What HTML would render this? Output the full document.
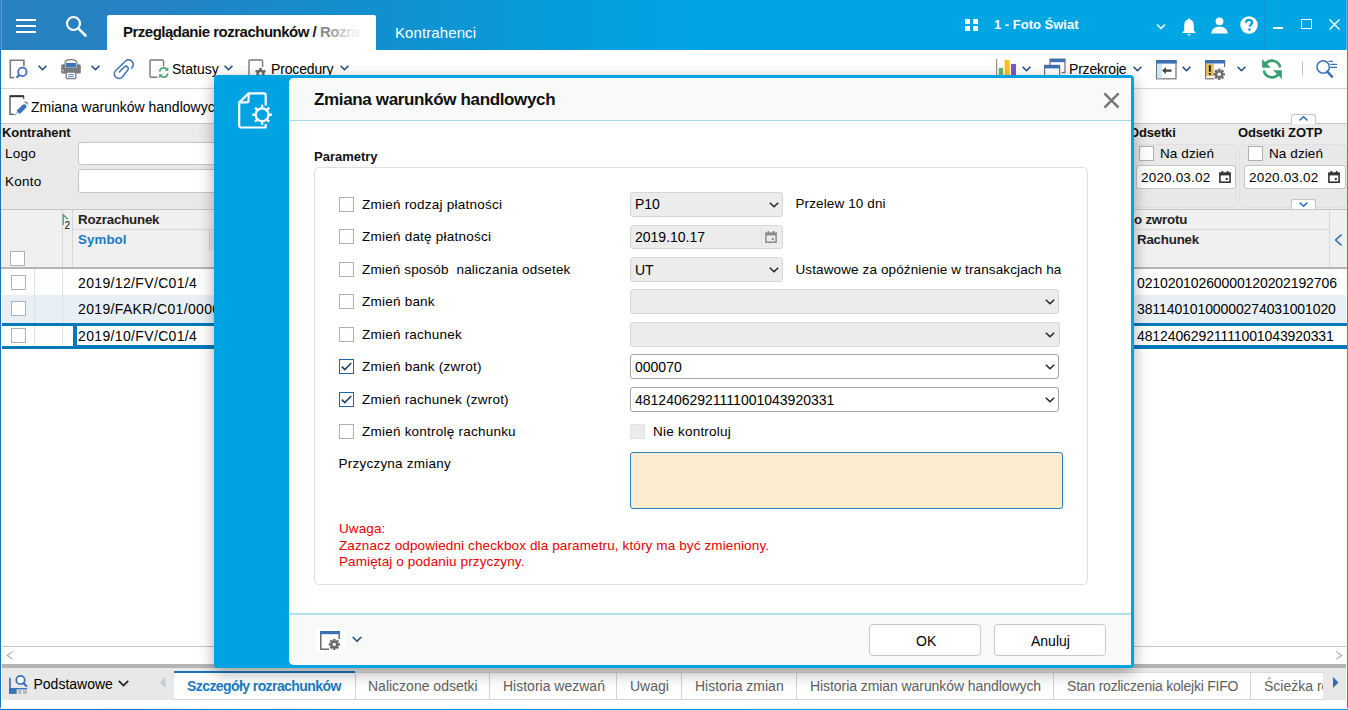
<!DOCTYPE html>
<html><head><meta charset="utf-8">
<style>
*{box-sizing:border-box;margin:0;padding:0}
html,body{width:1348px;height:710px;overflow:hidden;background:#fff}
body{position:relative;font-family:"Liberation Sans",sans-serif;color:#000}
.a{position:absolute}
.t{position:absolute;white-space:nowrap;line-height:1}
svg{position:absolute;overflow:visible}
.cb{position:absolute;width:15px;height:15px;border:1px solid #b0b0b0;background:#fff}
.chev{position:absolute}
</style></head><body>

<!-- ============ HEADER ============ -->
<div class="a" style="left:0;top:0;width:1348px;height:50px;background:linear-gradient(90deg,#2980c0 0px,#2583c3 150px,#1190d0 380px,#02a2e1 640px,#00a5e3 760px,#00a5e3 1348px)"></div>
<div class="a" style="left:1px;top:0;width:1px;height:50px;background:#5a9fd0"></div>
<div class="a" style="left:1346px;top:0;width:1px;height:50px;background:#45bce9"></div>
<!-- hamburger -->
<div class="a" style="left:16px;top:19px;width:20px;height:2px;background:#fff"></div>
<div class="a" style="left:16px;top:25px;width:20px;height:2px;background:#fff"></div>
<div class="a" style="left:16px;top:31px;width:20px;height:2px;background:#fff"></div>
<!-- search -->
<svg style="left:64px;top:14px" width="24" height="24" viewBox="0 0 24 24"><circle cx="9.5" cy="9.5" r="6.5" fill="none" stroke="#fff" stroke-width="2.2"/><path d="M14.3 14.3 L21.5 21.5" stroke="#fff" stroke-width="2.6" stroke-linecap="round"/></svg>
<!-- active tab -->
<div class="a" style="left:107px;top:15px;width:269px;height:35px;background:#fff;border-radius:2px 2px 0 0"></div>
<div class="t" style="left:123px;top:24px;font-size:15px;font-weight:700;letter-spacing:-0.5px;color:#111">Przeglądanie rozrachunków / <span style="color:#8a8a8a">R</span><span style="color:#a8a8a8">o</span><span style="color:#cacaca">z</span><span style="color:#e2e2e2">r</span><span style="color:#efefef">a</span></div>
<div class="t" style="left:395px;top:24.5px;font-size:15px;letter-spacing:0.1px;color:#fff">Kontrahenci</div>
<!-- apps -->
<div class="a" style="left:965px;top:19px;width:5px;height:5px;background:#fff"></div>
<div class="a" style="left:973px;top:19px;width:5px;height:5px;background:#fff"></div>
<div class="a" style="left:965px;top:26px;width:5px;height:5px;background:#fff"></div>
<div class="a" style="left:973px;top:26px;width:5px;height:5px;background:#fff"></div>
<div class="t" style="left:994px;top:18px;font-size:13px;font-weight:700;color:#fff">1 - Foto Świat</div>
<svg style="left:1156px;top:23px" width="10" height="7" viewBox="0 0 10 7"><path d="M1 1.5 L5 5.5 L9 1.5" fill="none" stroke="#fff" stroke-width="1.5"/></svg>
<!-- bell -->
<svg style="left:1181px;top:18px" width="16" height="19" viewBox="0 0 16 19"><path d="M8 1.5 C4.5 1.5 3.2 4.5 3.2 7.5 L3.2 12.5 L1 15 L15 15 L12.8 12.5 L12.8 7.5 C12.8 4.5 11.5 1.5 8 1.5 Z" fill="#fff"/><circle cx="8" cy="1.8" r="1.2" fill="#fff"/><path d="M6.3 16 L9.7 16 L8 18 Z" fill="#fff"/></svg>
<!-- person -->
<svg style="left:1211px;top:17px" width="17" height="17" viewBox="0 0 17 17"><circle cx="8.5" cy="4.3" r="3.9" fill="#fff"/><path d="M0.3 16.5 C0.8 11.5 4 9.8 8.5 9.8 C13 9.8 16.2 11.5 16.7 16.5 Z" fill="#fff"/></svg>
<!-- help -->
<svg style="left:1240px;top:16px" width="18" height="18" viewBox="0 0 18 18"><circle cx="9" cy="9" r="8.7" fill="#fff"/><path d="M6 6.8 C6 4.9 7.3 3.9 9 3.9 C10.8 3.9 12.1 5 12.1 6.5 C12.1 8.5 9.6 8.7 9.6 10.8" fill="none" stroke="#0aa0e0" stroke-width="2.2"/><circle cx="9.5" cy="13.6" r="1.3" fill="#0aa0e0"/></svg>
<div class="a" style="left:1264px;top:0;width:1px;height:50px;background:#1592cc"></div>
<!-- min max close -->
<div class="a" style="left:1273px;top:27px;width:10px;height:1.5px;background:#fff"></div>
<div class="a" style="left:1301px;top:19px;width:11px;height:10px;border:1.5px solid #fff"></div>
<svg style="left:1329px;top:19px" width="11" height="11" viewBox="0 0 11 11"><path d="M0.5 0.5 L10.5 10.5 M10.5 0.5 L0.5 10.5" stroke="#fff" stroke-width="1.4"/></svg>


<!-- ============ TOOLBAR ============ -->
<!-- ============ KONTRAHENT PANEL ============ -->
<div class="a" style="left:0;top:123px;width:1348px;height:87px;background:#ebebeb;border-top:1px solid #c6c6c6;border-bottom:1px solid #c6c6c6"></div>
<div class="t" style="left:2px;top:126px;font-size:13px;letter-spacing:-0.07px;font-weight:700;color:#111">Kontrahent</div>
<div class="a" style="left:2px;top:144px;width:230px;height:64px;background:#e9e9e9;border-radius:4px"></div>
<div class="t" style="left:5px;top:147px;font-size:13.5px;letter-spacing:0.23px;color:#000">Logo</div>
<div class="t" style="left:5px;top:175px;font-size:13.5px;letter-spacing:0.23px;color:#000">Konto</div>
<div class="a" style="left:78px;top:142px;width:160px;height:23px;background:#fff;border:1px solid #c4c4c4;border-radius:3px"></div>
<div class="a" style="left:78px;top:169px;width:160px;height:24px;background:#fff;border:1px solid #c4c4c4;border-radius:3px"></div>
<!-- odsetki -->
<div class="t" style="left:1129px;top:126px;font-size:13px;letter-spacing:-0.15px;font-weight:700;color:#111">Odsetki</div>
<div class="t" style="left:1238px;top:126px;font-size:13px;letter-spacing:-0.15px;font-weight:700;color:#111">Odsetki ZOTP</div>
<div class="a" style="left:1100px;top:144px;width:137px;height:64px;background:#e8e8e8;border:1px solid #e0e0e0;border-radius:5px"></div>
<div class="a" style="left:1239px;top:144px;width:108px;height:64px;background:#e8e8e8;border:1px solid #e0e0e0;border-radius:5px"></div>
<div class="cb" style="left:1139px;top:146px"></div>
<div class="t" style="left:1160px;top:147px;font-size:13.5px;letter-spacing:0.1px;color:#000">Na dzień</div>
<div class="cb" style="left:1248px;top:146px"></div>
<div class="t" style="left:1269px;top:147px;font-size:13.5px;letter-spacing:0.1px;color:#000">Na dzień</div>
<div class="a" style="left:1136px;top:165px;width:100px;height:24px;background:#fff;border:1px solid #c4c4c4;border-radius:3px"></div>
<div class="t" style="left:1141px;top:171px;font-size:13.5px;letter-spacing:0.18px;color:#000">2020.03.02</div>
<svg style="left:1219px;top:171px" width="12" height="12" viewBox="0 0 12 12"><rect x="0.9" y="2.2" width="10.2" height="9" fill="none" stroke="#333" stroke-width="1.6"/><rect x="0.5" y="1.8" width="11" height="2.6" fill="#333"/><rect x="2.6" y="0" width="1.6" height="2.5" fill="#333"/><rect x="7.8" y="0" width="1.6" height="2.5" fill="#333"/><rect x="6.8" y="7" width="2" height="2" fill="#333"/></svg>
<div class="a" style="left:1244px;top:165px;width:102px;height:24px;background:#fff;border:1px solid #c4c4c4;border-radius:3px"></div>
<div class="t" style="left:1249px;top:171px;font-size:13.5px;letter-spacing:0.18px;color:#000">2020.03.02</div>
<svg style="left:1328px;top:171px" width="12" height="12" viewBox="0 0 12 12"><rect x="0.9" y="2.2" width="10.2" height="9" fill="none" stroke="#333" stroke-width="1.6"/><rect x="0.5" y="1.8" width="11" height="2.6" fill="#333"/><rect x="2.6" y="0" width="1.6" height="2.5" fill="#333"/><rect x="7.8" y="0" width="1.6" height="2.5" fill="#333"/><rect x="6.8" y="7" width="2" height="2" fill="#333"/></svg>

<!-- up/down handles -->
<div class="a" style="left:1291px;top:114px;width:25px;height:10px;background:#fff;border:1px solid #c6c6c6;border-bottom:none;border-radius:3px 3px 0 0"></div>
<svg style="left:1299px;top:116px" width="9" height="5" viewBox="0 0 9 5"><path d="M0.6 4.4 L4.5 0.8 L8.4 4.4" fill="none" stroke="#2a6fb8" stroke-width="1.5"/></svg>
<div class="a" style="left:1291px;top:199px;width:25px;height:10px;background:#ebebeb;border:1px solid #c6c6c6;border-top:none;border-radius:0 0 3px 3px"></div>
<div class="a" style="left:1291px;top:199px;width:25px;height:10px;background:#fff;border:1px solid #c6c6c6;border-bottom:none;border-radius:3px 3px 0 0"></div>
<svg style="left:1299px;top:202px" width="9" height="5" viewBox="0 0 9 5"><path d="M0.6 0.6 L4.5 4.2 L8.4 0.6" fill="none" stroke="#2a6fb8" stroke-width="1.5"/></svg>
<!-- ============ GRID ============ -->
<div class="a" style="left:0;top:210px;width:1348px;height:57px;background:#f0f0f0"></div>
<div class="a" style="left:0;top:267px;width:1348px;height:2px;background:#b4b4b4"></div>
<div class="a" style="left:62px;top:210px;width:1px;height:57px;background:#d8d8d8"></div>
<div class="a" style="left:72px;top:210px;width:1px;height:57px;background:#d8d8d8"></div>
<div class="a" style="left:73px;top:229px;width:1256px;height:1px;background:#d8d8d8"></div>
<div class="a" style="left:209px;top:230px;width:6px;height:20px;border-left:1px solid #d0d0d0;background:#e8e8e8"></div>
<svg style="left:62px;top:214px" width="9" height="14" viewBox="0 0 9 14"><path d="M1.2 11 L1.2 0.8 L5.8 5.2" fill="none" stroke="#3aa56a" stroke-width="1.3"/></svg>
<div class="t" style="left:64.5px;top:221px;font-size:10px;color:#111">2</div>
<div class="t" style="left:78px;top:213px;font-size:13.3px;letter-spacing:-0.2px;font-weight:700;color:#222">Rozrachunek</div>
<div class="t" style="left:78px;top:232.5px;font-size:13.3px;letter-spacing:0.1px;font-weight:700;color:#1a7bc0">Symbol</div>
<div class="cb" style="left:10px;top:251px"></div>
<div class="t" style="left:1134px;top:213px;font-size:13.3px;letter-spacing:-0.2px;font-weight:700;color:#222">o zwrotu</div>
<div class="t" style="left:1137px;top:232.5px;font-size:13.3px;letter-spacing:-0.2px;font-weight:700;color:#222">Rachunek</div>
<div class="a" style="left:1329px;top:210px;width:1px;height:57px;background:#d8d8d8"></div>
<svg style="left:1334px;top:234px" width="9" height="12" viewBox="0 0 9 12"><path d="M7.6 0.6 L1.6 6 L7.6 11.4" fill="none" stroke="#2a6fb8" stroke-width="1.5"/></svg>
<!-- rows -->
<div class="a" style="left:2px;top:269px;width:1344px;height:26px;background:#fff"></div>
<div class="a" style="left:2px;top:295px;width:1344px;height:28px;background:#e8eff5"></div>
<div class="a" style="left:34px;top:269px;width:1px;height:54px;background:#d6e4f2"></div>
<div class="a" style="left:62px;top:269px;width:1px;height:54px;background:#d6e4f2"></div>
<div class="a" style="left:34px;top:324px;width:1px;height:22px;background:#d6e4f2"></div>
<div class="a" style="left:62px;top:324px;width:1px;height:22px;background:#d6e4f2"></div>
<div class="cb" style="left:11px;top:275px"></div>
<div class="cb" style="left:11px;top:301px"></div>
<div class="cb" style="left:11px;top:328px"></div>
<div class="t" style="left:78px;top:276px;font-size:14px;letter-spacing:0.35px;color:#000">2019/12/FV/C01/4</div>
<div class="t" style="left:78px;top:302px;font-size:14px;letter-spacing:0.35px;color:#000">2019/FAKR/C01/00001</div>
<div class="t" style="left:78px;top:329px;font-size:14px;letter-spacing:0.35px;color:#000">2019/10/FV/C01/4</div>
<div class="t" style="left:1137px;top:276px;font-size:14px;letter-spacing:-0.1px;color:#000">02102010260000120202192706</div>
<div class="t" style="left:1137px;top:302px;font-size:14px;letter-spacing:-0.1px;color:#000">38114010100000274031001020</div>
<div class="t" style="left:1137px;top:329px;font-size:14px;letter-spacing:-0.1px;color:#000">48124062921111001043920331</div>
<div class="a" style="left:2px;top:323px;width:1345px;height:2.5px;background:#0777be"></div>
<div class="a" style="left:2px;top:346px;width:1345px;height:2.5px;background:#0777be"></div>
<div class="a" style="left:73px;top:323px;width:4px;height:25px;background:#0777be"></div>
<div class="a" style="left:73px;top:345px;width:1274px;height:1px;background:#0777be"></div>

<!-- ============ SCROLL + BOTTOM TABS ============ -->
<div class="a" style="left:2px;top:646px;width:1344px;height:1px;background:#c4c4c4"></div>
<svg style="left:6px;top:651px" width="8" height="9" viewBox="0 0 8 9"><path d="M6.6 0.6 L1.2 4.5 L6.6 8.4" fill="none" stroke="#a8a8a8" stroke-width="1.1"/></svg>
<svg style="left:1335px;top:651px" width="8" height="9" viewBox="0 0 8 9"><path d="M1.2 0.6 L6.6 4.5 L1.2 8.4" fill="none" stroke="#a8a8a8" stroke-width="1.1"/></svg>
<div class="a" style="left:2px;top:664px;width:1344px;height:4px;background:#b4b4b4"></div>
<div class="a" style="left:2px;top:668px;width:1344px;height:32px;background:#e8e8e8"></div>
<svg style="left:9px;top:675px" width="19" height="19" viewBox="0 0 19 19"><rect x="0.1" y="2.8" width="1.7" height="16.1" fill="#3d72b8"/><rect x="0.1" y="13" width="17.9" height="1.4" fill="#3d72b8"/><rect x="0.1" y="13" width="7.6" height="5.9" fill="#3d72b8"/><rect x="9.2" y="15.2" width="3.3" height="3.7" fill="#b8b8b8"/><rect x="14" y="15.2" width="4" height="3.7" fill="#b8b8b8"/><circle cx="11.5" cy="5" r="4.2" fill="#fff" stroke="#3d72b8" stroke-width="1.8"/><path d="M14.6 8.3 L17.3 11" stroke="#3d72b8" stroke-width="2.2" stroke-linecap="round"/></svg>
<div class="t" style="left:33.5px;top:677px;font-size:14px;color:#000">Podstawowe</div>
<svg style="left:118px;top:680px" width="11" height="7" viewBox="0 0 11 7"><path d="M0.8 0.9 L5.5 5.6 L10.2 0.9" fill="none" stroke="#222" stroke-width="1.7"/></svg>
<svg style="left:160px;top:677px" width="6" height="11" viewBox="0 0 6 11"><path d="M5.5 0 L0 5.5 L5.5 11 Z" fill="#c2ccd6"/></svg>
<div class="a" style="left:174px;top:672px;width:1149px;height:28px;background:#fff;border-top:1px solid #dadada"></div>
<div class="a" style="left:174px;top:699px;width:1149px;height:1px;background:#d4d4d4"></div>
<div class="a" style="left:174px;top:671px;width:181px;height:2px;background:#1a75b8"></div>
<div class="t" style="left:187px;top:679px;font-size:14px;font-weight:700;letter-spacing:-0.58px;color:#1a7bc0">Szczegóły rozrachunków</div>
<div class="a" style="left:355px;top:673px;width:1px;height:26px;background:#d4d4d4"></div>
<div class="t" style="left:368px;top:679px;font-size:14px;color:#606060">Naliczone odsetki</div>
<div class="a" style="left:489px;top:673px;width:1px;height:26px;background:#d4d4d4"></div>
<div class="t" style="left:503px;top:679px;font-size:14px;color:#606060">Historia wezwań</div>
<div class="a" style="left:616px;top:673px;width:1px;height:26px;background:#d4d4d4"></div>
<div class="t" style="left:630px;top:679px;font-size:14px;color:#606060">Uwagi</div>
<div class="a" style="left:681px;top:673px;width:1px;height:26px;background:#d4d4d4"></div>
<div class="t" style="left:695px;top:679px;font-size:14px;color:#606060">Historia zmian</div>
<div class="a" style="left:796px;top:673px;width:1px;height:26px;background:#d4d4d4"></div>
<div class="t" style="left:810px;top:679px;font-size:14px;letter-spacing:-0.07px;color:#606060">Historia zmian warunków handlowych</div>
<div class="a" style="left:1053px;top:673px;width:1px;height:26px;background:#d4d4d4"></div>
<div class="t" style="left:1067px;top:679px;font-size:14px;letter-spacing:-0.21px;color:#606060">Stan rozliczenia kolejki FIFO</div>
<div class="a" style="left:1250px;top:673px;width:1px;height:26px;background:#d4d4d4"></div>
<div class="a" style="left:1251px;top:670px;width:72px;height:29px;overflow:hidden"><div class="t" style="left:13px;top:9px;font-size:14px;color:#606060">Ścieżka rozliczeń</div></div>
<div class="a" style="left:1323px;top:668px;width:23px;height:32px;background:#e8e8e8"></div>
<svg style="left:1333px;top:677px" width="6" height="11" viewBox="0 0 6 11"><path d="M0 0 L5.5 5.5 L0 11 Z" fill="#2a6fb8"/></svg>


<!-- tb -->
<div class="a" style="left:0;top:88px;width:1348px;height:1px;background:#d6d6d6"></div>
<!-- doc-search icon -->
<svg style="left:9px;top:59px" width="20" height="20" viewBox="0 0 20 20"><path d="M5.3 18.6 L1.3 18.6 L1.3 1.3 L14.9 1.3 L14.9 7.2" fill="none" stroke="#7a7a7a" stroke-width="1.6"/><circle cx="13.4" cy="12.9" r="4.2" fill="none" stroke="#3c70b8" stroke-width="1.8"/><path d="M10.3 16 L7.6 18.6" stroke="#3c70b8" stroke-width="2.2"/></svg>
<svg style="left:38px;top:65px" width="9" height="6" viewBox="0 0 9 6"><path d="M0.6 0.8 L4.5 4.7 L8.4 0.8" fill="none" stroke="#1f4a80" stroke-width="1.6"/></svg>
<!-- printer -->
<svg style="left:61px;top:59px" width="20" height="20" viewBox="0 0 20 20"><path d="M4.2 5.5 L4.2 3.5 C4.2 1.2 6 0.6 10 0.6 C14 0.6 15.8 1.2 15.8 3.5 L15.8 5.5" fill="none" stroke="#7a7a7a" stroke-width="1.4"/><rect x="0.2" y="5.2" width="19.6" height="9.3" rx="1.6" fill="#7a7a7a"/><rect x="4.2" y="3.7" width="11.6" height="5" fill="#fff"/><rect x="4.6" y="3.9" width="10.8" height="4.6" fill="#3f73b8"/><rect x="5.2" y="13" width="9.6" height="6.6" rx="1" fill="#fff" stroke="#7a7a7a" stroke-width="1.3"/><path d="M7.2 15.6 L12.8 15.6 M7.2 17.6 L12.8 17.6" stroke="#3f73b8" stroke-width="0.9"/><circle cx="2" cy="11.5" r="0.7" fill="#fff"/></svg>
<svg style="left:91px;top:65px" width="9" height="6" viewBox="0 0 9 6"><path d="M0.6 0.8 L4.5 4.7 L8.4 0.8" fill="none" stroke="#1f4a80" stroke-width="1.6"/></svg>
<!-- paperclip -->
<svg style="left:110px;top:56px" width="28" height="26" viewBox="0 0 28 26"><path d="M21.6 12.1 A4.6 4.6 0 1 0 15.55 4.95 L5.75 14.45 A4.6 4.6 0 1 0 12.25 20.95 L17.63 14.23 A2.3 2.3 0 1 0 14.37 10.97 L9.4 15.94" fill="none" stroke="#3d72b8" stroke-width="1.5" stroke-linecap="round"/></svg>
<!-- statusy icon -->
<svg style="left:149px;top:59px" width="22" height="21" viewBox="0 0 22 21"><path d="M8.6 18.2 L2.2 18.2 Q1 18.2 1 17 L1 2.2 Q1 1 2.2 1 L13.4 1 Q14.6 1 14.6 2.2 L14.6 7.5" fill="none" stroke="#7a7a7a" stroke-width="1.4"/><path d="M10.6 12.6 C11 10.2 12.6 8.8 14.7 8.8 C16.3 8.8 17.5 9.6 18.1 10.6" fill="none" stroke="#4aa87a" stroke-width="1.7"/><path d="M19.3 8 L19.3 12 L15.5 11.4 Z" fill="#4aa87a"/><path d="M18.8 14.4 C18.4 16.8 16.8 18.2 14.7 18.2 C13.1 18.2 11.9 17.4 11.3 16.4" fill="none" stroke="#4aa87a" stroke-width="1.7"/><path d="M10.1 19 L10.1 15 L13.9 15.6 Z" fill="#4aa87a"/></svg>
<div class="t" style="left:172px;top:62px;font-size:14px;letter-spacing:0px;color:#000">Statusy</div>
<svg style="left:224px;top:65px" width="9" height="6" viewBox="0 0 9 6"><path d="M0.6 0.8 L4.5 4.7 L8.4 0.8" fill="none" stroke="#1f4a80" stroke-width="1.6"/></svg>
<!-- procedury icon -->
<svg style="left:248px;top:59px" width="22" height="21" viewBox="0 0 22 21"><path d="M1 18.5 L1 2.2 Q1 1 2.2 1 L13.4 1 Q14.6 1 14.6 2.2 L14.6 8" fill="none" stroke="#7a7a7a" stroke-width="1.4"/><g transform="translate(12.5,14.5)"><circle r="4" fill="#6a6a6a"/><path d="M-1.2 -5.6 L1.2 -5.6 L1.2 5.6 L-1.2 5.6 Z" fill="#6a6a6a"/><path d="M-1.2 -5.6 L1.2 -5.6 L1.2 5.6 L-1.2 5.6 Z" fill="#6a6a6a" transform="rotate(60)"/><path d="M-1.2 -5.6 L1.2 -5.6 L1.2 5.6 L-1.2 5.6 Z" fill="#6a6a6a" transform="rotate(120)"/><circle r="1.6" fill="#fff"/></g></svg>
<div class="t" style="left:271px;top:62px;font-size:14px;letter-spacing:-0.15px;color:#000">Procedury</div>
<svg style="left:340px;top:65px" width="9" height="6" viewBox="0 0 9 6"><path d="M0.6 0.8 L4.5 4.7 L8.4 0.8" fill="none" stroke="#1f4a80" stroke-width="1.6"/></svg>

<!-- right side -->
<svg style="left:996px;top:59px" width="21" height="20" viewBox="0 0 21 20"><path d="M0.6 0 L0.6 19.5" stroke="#8a8a8a" stroke-width="1.1"/><rect x="2.8" y="8.8" width="4.3" height="11" fill="#62b46e"/><rect x="8.6" y="1" width="5" height="19" fill="#fcbf1e"/><rect x="15" y="4.9" width="5" height="15" fill="#7e57c2"/></svg>
<svg style="left:1022px;top:66px" width="9" height="6" viewBox="0 0 9 6"><path d="M0.6 0.8 L4.5 4.7 L8.4 0.8" fill="none" stroke="#1f4a80" stroke-width="1.6"/></svg>
<svg style="left:1044px;top:59px" width="22" height="21" viewBox="0 0 22 21"><path d="M6 6 L6 0.2 L21 0.2 L21 13.6 L17.5 13.6" fill="none" stroke="#707070" stroke-width="1.2"/><rect x="6" y="0" width="15" height="3.2" fill="#3d6fb5"/><rect x="0.6" y="6.4" width="15" height="14" fill="#fff" stroke="#707070" stroke-width="1.2"/><rect x="0.6" y="6" width="15" height="3.4" fill="#3d6fb5"/></svg>
<div class="t" style="left:1069px;top:62px;font-size:14px;letter-spacing:-0.19px;color:#000">Przekroje</div>
<svg style="left:1133px;top:66px" width="9" height="6" viewBox="0 0 9 6"><path d="M0.6 0.8 L4.5 4.7 L8.4 0.8" fill="none" stroke="#1f4a80" stroke-width="1.6"/></svg>
<svg style="left:1156px;top:60px" width="21" height="20" viewBox="0 0 21 20"><rect x="0.6" y="0.6" width="19.4" height="18.2" fill="#fff" stroke="#707070" stroke-width="1.2"/><rect x="1.2" y="4" width="4.6" height="14.3" fill="#cfe6f8"/><rect x="0" y="0" width="20.6" height="3.6" fill="#3d6fb5"/><path d="M6 10.6 L10 7.2 L10 9.4 L15.5 9.4 L15.5 11.8 L10 11.8 L10 14 Z" fill="#444"/></svg>
<svg style="left:1182px;top:66px" width="9" height="6" viewBox="0 0 9 6"><path d="M0.6 0.8 L4.5 4.7 L8.4 0.8" fill="none" stroke="#1f4a80" stroke-width="1.6"/></svg>
<svg style="left:1205px;top:60px" width="21" height="20" viewBox="0 0 21 20"><path d="M0.6 18.8 L0.6 0.6 L19.6 0.6 L19.6 7" fill="none" stroke="#707070" stroke-width="1.2"/><rect x="1.1" y="3.6" width="7.6" height="12.6" fill="#e9b85a"/><rect x="0" y="0" width="20" height="3.5" fill="#3d6fb5"/><rect x="3.9" y="5.2" width="1.9" height="6.6" fill="#222"/><rect x="3.9" y="13" width="1.9" height="1.9" fill="#222"/><path d="M0.6 18.8 L9 18.8" stroke="#707070" stroke-width="1.2"/><g transform="translate(14.2,14.3)"><circle r="4.1" fill="#707070"/><path d="M-1.3 -5.7 L1.3 -5.7 L1.3 5.7 L-1.3 5.7 Z" fill="#707070"/><path d="M-1.3 -5.7 L1.3 -5.7 L1.3 5.7 L-1.3 5.7 Z" fill="#707070" transform="rotate(45)"/><path d="M-1.3 -5.7 L1.3 -5.7 L1.3 5.7 L-1.3 5.7 Z" fill="#707070" transform="rotate(90)"/><path d="M-1.3 -5.7 L1.3 -5.7 L1.3 5.7 L-1.3 5.7 Z" fill="#707070" transform="rotate(135)"/><circle r="1.8" fill="#fff"/></g></svg>
<svg style="left:1237px;top:66px" width="9" height="6" viewBox="0 0 9 6"><path d="M0.6 0.8 L4.5 4.7 L8.4 0.8" fill="none" stroke="#1f4a80" stroke-width="1.6"/></svg>
<svg style="left:1256px;top:54px" width="32" height="30" viewBox="0 0 32 30"><path d="M9.64 9.66 A8.3 8.3 0 0 1 24.17 13.56" fill="none" stroke="#35a172" stroke-width="2.6"/><path d="M6.1 4.9 L6.1 13.8 L14.9 13.8 Z" fill="#35a172"/><path d="M7.83 16.44 A8.3 8.3 0 0 0 22.36 20.34" fill="none" stroke="#35a172" stroke-width="2.6"/><path d="M25.9 16.2 L25.9 25 L17.1 16.2 Z" fill="#35a172"/></svg>
<div class="a" style="left:1302px;top:61px;width:1px;height:15px;background:#c4c4c4"></div>
<svg style="left:1316px;top:59px" width="22" height="20" viewBox="0 0 22 20"><circle cx="7.2" cy="8" r="6.2" fill="none" stroke="#3d72b8" stroke-width="1.5"/><path d="M11.3 12.6 L16 17.6" stroke="#3d72b8" stroke-width="2.6" stroke-linecap="round"/><path d="M12.5 2.4 L17 2.4 M14.3 5.4 L21 5.4 M14.3 8.4 L21 8.4" stroke="#3d72b8" stroke-width="1.2"/></svg>

<!-- ============ ZMIANA ROW ============ -->
<svg style="left:9px;top:95px" width="20" height="21" viewBox="0 0 20 21"><path d="M5 19.4 L1 19.4 L1 1.2 L14.6 1.2 L14.6 4" fill="none" stroke="#555" stroke-width="1.4"/><path d="M1 1.2 L14.6 1.2" stroke="#333" stroke-width="2"/><path d="M7.5 15.8 L13.4 9.9 C14.4 8.9 15.9 8.9 16.8 9.8 C17.7 10.7 17.7 12.2 16.7 13.2 L10.8 19.1 Z" fill="#3d72b8"/><path d="M8.5 17.5 L5.2 20.8" stroke="#3d72b8" stroke-width="1.2" stroke-dasharray="1.2 1"/><path d="M15.6 7.2 C17 6.9 18.4 7.8 18.8 9.3" fill="none" stroke="#3d72b8" stroke-width="1.2"/></svg>
<div class="t" style="left:31px;top:99.5px;font-size:14px;letter-spacing:0px;color:#000">Zmiana warunków handlowych</div>

<!-- ============ DIALOG ============ -->
<div class="a" style="left:214px;top:75px;width:920px;height:593px;background:#00a3e2;border-radius:4px;box-shadow:0 5px 16px rgba(0,0,0,0.33)"></div>
<div class="a" style="left:289px;top:78px;width:842px;height:587px;background:#fff;border-radius:5px 0 0 5px;overflow:hidden">
  <div class="a" style="left:0;top:0;width:842px;height:43px;background:#f8f9f9;border-bottom:1px solid #a6d8f0"></div>
  <div class="a" style="left:0;top:535px;width:842px;height:52px;background:#f8f9f9;border-top:2px solid #b4def2"></div>
</div>
<!-- sidebar icon -->
<svg style="left:236px;top:90px" width="42" height="42" viewBox="0 0 42 42"><path d="M29.7 15.4 L29.7 5.4 C29.7 4.1 29 3.4 27.7 3.4 L12.6 3.4 L3.2 12.4 L3.2 35.6 C3.2 36.8 3.9 37.5 5.1 37.5 L29.7 37.5 L29.7 34" fill="none" stroke="#fff" stroke-width="2.2" stroke-linejoin="round"/><path d="M12.6 3.4 L12.6 10.6 C12.6 11.8 11.9 12.4 10.8 12.4 L3.2 12.4" fill="none" stroke="#fff" stroke-width="2.2" stroke-linejoin="round"/><g transform="translate(26.1,24.7)"><circle r="6.4" fill="none" stroke="#fff" stroke-width="2.3"/><g fill="#fff"><rect x="-1.2" y="-10" width="2.4" height="3.4"/><rect x="-1.2" y="6.6" width="2.4" height="3.4"/><rect x="-10" y="-1.2" width="3.4" height="2.4"/><rect x="6.6" y="-1.2" width="3.4" height="2.4"/><g transform="rotate(45)"><rect x="-1.2" y="-10" width="2.4" height="3.4"/><rect x="-1.2" y="6.6" width="2.4" height="3.4"/><rect x="-10" y="-1.2" width="3.4" height="2.4"/><rect x="6.6" y="-1.2" width="3.4" height="2.4"/></g></g></g></svg>
<div class="t" style="left:314px;top:91px;font-size:17px;font-weight:700;color:#111;letter-spacing:-0.35px">Zmiana warunków handlowych</div>
<svg style="left:1103px;top:92px" width="17" height="17" viewBox="0 0 17 17"><path d="M1.4 1.4 L15.6 15.6 M15.6 1.4 L1.4 15.6" stroke="#777" stroke-width="2.5"/></svg>

<div class="t" style="left:314px;top:150px;font-size:13px;font-weight:700;color:#111">Parametry</div>
<div class="a" style="left:314px;top:167px;width:774px;height:418px;border:1px solid #dedede;border-radius:5px"></div>

<!-- rows -->
<div class="cb" style="left:339px;top:197px"></div>
<div class="t" style="left:362px;top:197.5px;font-size:13.5px;letter-spacing:0.23px">Zmień rodzaj płatności</div>
<div class="cb" style="left:339px;top:229px"></div>
<div class="t" style="left:362px;top:230px;font-size:13.5px;letter-spacing:0.23px">Zmień datę płatności</div>
<div class="cb" style="left:339px;top:262px"></div>
<div class="t" style="left:362px;top:262.5px;font-size:13.5px;letter-spacing:0.16px">Zmień sposób&nbsp; naliczania odsetek</div>
<div class="cb" style="left:339px;top:294px"></div>
<div class="t" style="left:362px;top:295px;font-size:13.5px;letter-spacing:0.23px">Zmień bank</div>
<div class="cb" style="left:339px;top:327px"></div>
<div class="t" style="left:362px;top:327.5px;font-size:13.5px;letter-spacing:0.23px">Zmień rachunek</div>
<div class="cb" style="left:339px;top:359px;border-color:#1a64b0"></div>
<svg style="left:341px;top:362px" width="11" height="9" viewBox="0 0 11 9"><path d="M0.8 4.6 L3.8 7.6 L10.2 1" fill="none" stroke="#1a3f74" stroke-width="1.5"/></svg>
<div class="t" style="left:362px;top:360px;font-size:13.5px;letter-spacing:0.23px">Zmień bank (zwrot)</div>
<div class="cb" style="left:339px;top:392px;border-color:#1a64b0"></div>
<svg style="left:341px;top:395px" width="11" height="9" viewBox="0 0 11 9"><path d="M0.8 4.6 L3.8 7.6 L10.2 1" fill="none" stroke="#1a3f74" stroke-width="1.5"/></svg>
<div class="t" style="left:362px;top:392.5px;font-size:13.5px;letter-spacing:0.23px">Zmień rachunek (zwrot)</div>
<div class="cb" style="left:339px;top:424px"></div>
<div class="t" style="left:362px;top:425px;font-size:13.5px;letter-spacing:0.23px">Zmień kontrolę rachunku</div>
<div class="t" style="left:338.5px;top:457px;font-size:13.5px;letter-spacing:0.23px">Przyczyna zmiany</div>

<!-- inputs -->
<div class="a" style="left:630px;top:192px;width:153px;height:25px;background:#ececec;border:1px solid #d6d6d6;border-radius:3px"></div>
<div class="t" style="left:635px;top:197px;font-size:14px">P10</div>
<svg style="left:769px;top:202px" width="10" height="6" viewBox="0 0 10 6"><path d="M0.8 0.8 L5 4.8 L9.2 0.8" fill="none" stroke="#222" stroke-width="1.5"/></svg>
<div class="t" style="left:795.5px;top:197px;font-size:13.5px;letter-spacing:0.12px">Przelew 10 dni</div>

<div class="a" style="left:630px;top:225px;width:153px;height:24px;background:#ececec;border:1px solid #d6d6d6;border-radius:3px"></div>
<div class="a" style="left:761px;top:227px;width:1px;height:20px;background:#e0e0e0"></div>
<div class="t" style="left:635px;top:230px;font-size:14px">2019.10.17</div>
<svg style="left:765px;top:231px" width="12" height="12" viewBox="0 0 12 12"><rect x="0.9" y="2.2" width="10.2" height="9" fill="none" stroke="#8a8a8a" stroke-width="1.5"/><rect x="0.5" y="1.8" width="11" height="2.6" fill="#8a8a8a"/><rect x="2.6" y="0" width="1.6" height="2.5" fill="#8a8a8a"/><rect x="7.8" y="0" width="1.6" height="2.5" fill="#8a8a8a"/><rect x="6.8" y="7" width="2" height="2" fill="#8a8a8a"/></svg>

<div class="a" style="left:630px;top:257px;width:153px;height:25px;background:#ececec;border:1px solid #d6d6d6;border-radius:3px"></div>
<div class="t" style="left:635px;top:262.5px;font-size:14px">UT</div>
<svg style="left:769px;top:267px" width="10" height="6" viewBox="0 0 10 6"><path d="M0.8 0.8 L5 4.8 L9.2 0.8" fill="none" stroke="#222" stroke-width="1.5"/></svg>
<div class="a" style="left:795.5px;top:260px;width:265px;height:20px;overflow:hidden"><div class="t" style="left:0;top:2.5px;font-size:13.5px;letter-spacing:0.12px">Ustawowe za opóźnienie w transakcjach handlowych</div></div>

<div class="a" style="left:630px;top:289px;width:429px;height:25px;background:#ececec;border:1px solid #d6d6d6;border-radius:3px"></div>
<svg style="left:1045px;top:299px" width="10" height="6" viewBox="0 0 10 6"><path d="M0.8 0.8 L5 4.8 L9.2 0.8" fill="none" stroke="#222" stroke-width="1.5"/></svg>
<div class="a" style="left:630px;top:322px;width:430px;height:25px;background:#ececec;border:1px solid #d6d6d6;border-radius:3px"></div>
<svg style="left:1045px;top:332px" width="10" height="6" viewBox="0 0 10 6"><path d="M0.8 0.8 L5 4.8 L9.2 0.8" fill="none" stroke="#222" stroke-width="1.5"/></svg>

<div class="a" style="left:630px;top:354px;width:429px;height:25px;background:#fff;border:1px solid #a4a4a4;border-radius:3px"></div>
<div class="t" style="left:635px;top:360px;font-size:14px">000070</div>
<svg style="left:1045px;top:364px" width="10" height="6" viewBox="0 0 10 6"><path d="M0.8 0.8 L5 4.8 L9.2 0.8" fill="none" stroke="#222" stroke-width="1.5"/></svg>
<div class="a" style="left:630px;top:387px;width:429px;height:25px;background:#fff;border:1px solid #a4a4a4;border-radius:3px"></div>
<div class="t" style="left:635px;top:392.5px;font-size:14px">48124062921111001043920331</div>
<svg style="left:1045px;top:397px" width="10" height="6" viewBox="0 0 10 6"><path d="M0.8 0.8 L5 4.8 L9.2 0.8" fill="none" stroke="#222" stroke-width="1.5"/></svg>

<div class="a" style="left:630px;top:424px;width:15px;height:15px;background:#ececec;border:1px solid #e2e2e2"></div>
<div class="t" style="left:653px;top:425px;font-size:13.5px;letter-spacing:0.23px">Nie kontroluj</div>

<div class="a" style="left:630px;top:452px;width:433px;height:57px;background:#fcebcd;border:1px solid #2a7fc0;border-radius:3px"></div>

<div class="t" style="left:339px;top:522px;font-size:13.5px;letter-spacing:0.12px;color:#e80000">Uwaga:</div>
<div class="t" style="left:339px;top:538.5px;font-size:13.5px;letter-spacing:0.12px;color:#e80000">Zaznacz odpowiedni checkbox dla parametru, który ma być zmieniony.</div>
<div class="t" style="left:339px;top:555px;font-size:13.5px;letter-spacing:0.12px;color:#e80000">Pamiętaj o podaniu przyczyny.</div>

<!-- footer -->
<div class="a" style="left:316px;top:627.5px;width:29px;height:25px;background:#fff;border-radius:4px"></div>
<svg style="left:320px;top:631px" width="21" height="19" viewBox="0 0 21 19"><rect x="0" y="0" width="20" height="3.2" fill="#3d6fb5"/><path d="M0.8 3 L0.8 18.2 L9 18.2 M19.2 3 L19.2 8" fill="none" stroke="#6a6a6a" stroke-width="1.5"/><g transform="translate(14.3,13.4)"><circle r="4" fill="#6a6a6a"/><g fill="#6a6a6a"><rect x="-1.2" y="-5.6" width="2.4" height="11.2"/><rect x="-1.2" y="-5.6" width="2.4" height="11.2" transform="rotate(45)"/><rect x="-1.2" y="-5.6" width="2.4" height="11.2" transform="rotate(90)"/><rect x="-1.2" y="-5.6" width="2.4" height="11.2" transform="rotate(135)"/></g><circle r="1.7" fill="#f8f9f9"/></g></svg>
<svg style="left:352px;top:636px" width="10" height="7" viewBox="0 0 10 7"><path d="M0.8 1 L5 5.2 L9.2 1" fill="none" stroke="#1f4a80" stroke-width="1.6"/></svg>
<div class="a" style="left:869px;top:624px;width:112px;height:32px;background:#fff;border:1px solid #c8c8c8;border-radius:4px"></div>
<div class="t" style="left:916px;top:633.5px;font-size:14px">OK</div>
<div class="a" style="left:994px;top:624px;width:112px;height:32px;background:#fff;border:1px solid #c8c8c8;border-radius:4px"></div>
<div class="t" style="left:1031px;top:633.5px;font-size:14px">Anuluj</div>

<div class="a" style="left:0;top:50px;width:1px;height:660px;background:#1a72b8"></div>
<div class="a" style="left:1347px;top:50px;width:1px;height:660px;background:#06a0e0"></div>
<div class="a" style="left:0;top:707px;width:1348px;height:2px;background:linear-gradient(180deg,rgba(220,240,250,0) 0%,#e6f4fb 100%)"></div>
<div class="a" style="left:0;top:709px;width:1348px;height:1px;background:linear-gradient(90deg,#1a72b8 0px,#1190d0 380px,#02a2e1 640px,#00a5e3 1348px)"></div>

</body></html>
